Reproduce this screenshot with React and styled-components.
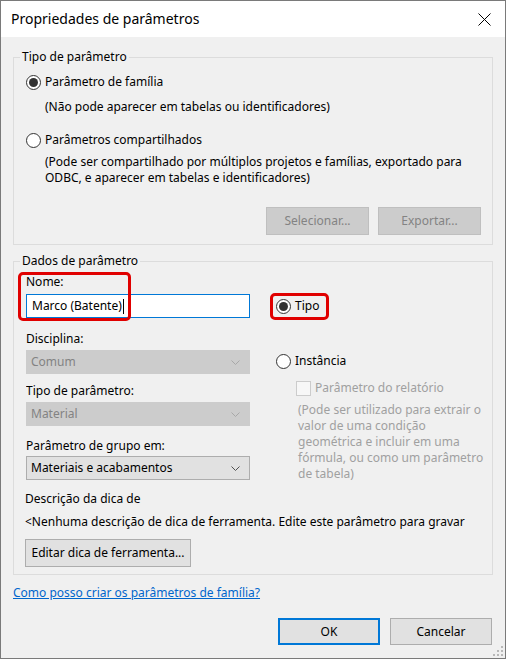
import React from "react";
import styled, { createGlobalStyle } from "styled-components";

const GlobalStyle = createGlobalStyle`
  html, body { margin: 0; padding: 0; background: #ffffff; }
  * { box-sizing: border-box; }
`;

const Window = styled.div`
  position: relative;
  width: 506px;
  height: 659px;
  border: 1px solid #7a7a7a;
  background: #f0f0f0;
  display: flex;
  flex-direction: column;
  font-family: "Noto Sans", "Segoe UI", sans-serif;
  font-size: 12px;
  line-height: 16px;
  color: #000;
`;

const TitleBar = styled.div`
  height: 36px;
  flex: none;
  background: #ffffff;
  display: flex;
  align-items: center;
  justify-content: space-between;
  padding-left: 10px;
`;

const Title = styled.span`
  font-size: 14px;
  line-height: 20px;
`;

const CloseButton = styled.div`
  width: 46px;
  height: 36px;
  display: flex;
  align-items: center;
  justify-content: center;
  padding-left: 4px;
`;

const Content = styled.div`
  padding: 12px 12px 0 12px;
  display: flex;
  flex-direction: column;
`;

const GroupBox = styled.fieldset`
  margin: ${(p) => p.$mt || 0}px 0 0 0;
  padding: 0;
  border: 1px solid #dcdcdc;
  min-width: 0;
`;

const Legend = styled.legend`
  margin-left: 6px;
  padding: 0 2px;
  line-height: 16px;
`;

const GroupBody = styled.div`
  padding: ${(p) => p.$pad};
  display: flex;
  flex-direction: column;
`;

const RadioRow = styled.div`
  display: flex;
  align-items: center;
  gap: 4px;
  height: 16px;
  margin-top: ${(p) => p.$mt || 0}px;
`;

const RadioCircle = styled.span`
  width: 15px;
  height: 15px;
  flex: none;
  border-radius: 50%;
  border: 1px solid #333333;
  background: #ffffff;
  display: flex;
  align-items: center;
  justify-content: center;
  &::after {
    content: "";
    display: ${(p) => (p.$checked ? "block" : "none")};
    width: 9px;
    height: 9px;
    border-radius: 50%;
    background: #333333;
  }
`;

const Note = styled.div`
  margin-top: ${(p) => p.$mt || 0}px;
  margin-left: ${(p) => p.$indent || 0}px;
  white-space: nowrap;
`;

const ButtonRow = styled.div`
  display: flex;
  justify-content: flex-end;
  gap: ${(p) => p.$gap}px;
  margin-top: ${(p) => p.$mt || 0}px;
  margin-right: ${(p) => p.$mr || 0}px;
`;

const Button = styled.div`
  width: ${(p) => p.$w}px;
  height: ${(p) => p.$h || 28}px;
  display: flex;
  align-items: center;
  justify-content: center;
  background: ${(p) => (p.$disabled ? "#cccccc" : "#e1e1e1")};
  border: ${(p) =>
    p.$default
      ? "2px solid #0078d7"
      : p.$disabled
      ? "1px solid #bfbfbf"
      : "1px solid #adadad"};
  color: ${(p) => (p.$disabled ? "#838383" : "#000")};
  white-space: nowrap;
  margin-top: ${(p) => p.$mt || 0}px;
  margin-left: ${(p) => p.$ml || 0}px;
`;

const Columns = styled.div`
  display: flex;
  align-items: flex-start;
`;

const LeftColumn = styled.div`
  width: 224px;
  flex: none;
  display: flex;
  flex-direction: column;
`;

const RightColumn = styled.div`
  margin-left: 26px;
  display: flex;
  flex-direction: column;
`;

const FieldLabel = styled.div`
  margin-top: ${(p) => p.$mt || 0}px;
  margin-left: ${(p) => p.$ml || 0}px;
  white-space: nowrap;
  overflow: hidden;
`;

const TextBox = styled.div`
  height: 24px;
  margin-top: ${(p) => p.$mt || 0}px;
  border: 1px solid #0078d7;
  background: #ffffff;
  display: flex;
  align-items: center;
  padding-left: 5px;
`;

const Caret = styled.span`
  width: 1px;
  height: 15px;
  background: #000;
  margin-left: 1px;
`;

const Select = styled.div`
  height: 24px;
  margin-top: ${(p) => p.$mt || 0}px;
  border: 1px solid ${(p) => (p.$disabled ? "#cccccc" : "#adadad")};
  background: ${(p) => (p.$disabled ? "#cccccc" : "#e1e1e1")};
  color: ${(p) => (p.$disabled ? "#838383" : "#000")};
  display: flex;
  align-items: center;
  justify-content: space-between;
  padding: 0 9px 0 4px;
`;

const CheckRow = styled.div`
  display: flex;
  align-items: center;
  margin-top: ${(p) => p.$mt || 0}px;
  margin-left: 20px;
  gap: 4px;
  color: #a0a0a0;
  white-space: nowrap;
`;

const CheckBox = styled.span`
  width: 15px;
  height: 15px;
  border: 1px solid #cccccc;
  background: #f7f7f7;
`;

const Hint = styled.div`
  margin-top: ${(p) => p.$mt || 0}px;
  margin-left: 22px;
  color: #a0a0a0;
  white-space: nowrap;
`;

const Link = styled.a`
  margin-top: 10px;
  align-self: flex-start;
  color: #0066cc;
  text-decoration: underline;
  cursor: pointer;
`;

const Highlight = styled.div`
  position: absolute;
  left: ${(p) => p.$x}px;
  top: ${(p) => p.$y}px;
  width: ${(p) => p.$w}px;
  height: ${(p) => p.$h}px;
  border: 3px solid #e00000;
  border-radius: 5px;
  pointer-events: none;
`;

const Grip = styled.svg`
  position: absolute;
  right: 1px;
  bottom: 1px;
`;

const Chevron = ({ color }) => (
  <svg width="9" height="5" viewBox="0 0 9 5">
    <path d="M0.5 0.5 L4.5 4.5 L8.5 0.5" fill="none" stroke={color} strokeWidth="1" />
  </svg>
);

const Radio = ({ checked, label, mt }) => (
  <RadioRow $mt={mt}>
    <RadioCircle $checked={checked} />
    <span>{label}</span>
  </RadioRow>
);

export default function App() {
  return (
    <>
      <GlobalStyle />
      <Window>
        <TitleBar>
          <Title>Propriedades de parâmetros</Title>
          <CloseButton>
            <svg width="13" height="13" viewBox="0 0 13 13">
              <path d="M0.5 0.5 L12.5 12.5 M12.5 0.5 L0.5 12.5" stroke="#000" strokeWidth="1" />
            </svg>
          </CloseButton>
        </TitleBar>

        <Content>
          <GroupBox>
            <Legend>Tipo de parâmetro</Legend>
            <GroupBody $pad="9px 11px 9px 12px">
              <Radio checked label="Parâmetro de família" />
              <Note $mt={9} $indent={19}>(Não pode aparecer em tabelas ou identificadores)</Note>
              <Radio label="Parâmetros compartilhados" mt={17} />
              <Note $mt={6} $indent={19}>
                (Pode ser compartilhado por múltiplos projetos e famílias, exportado para
                <br />
                ODBC, e aparecer em tabelas e identificadores)
              </Note>
              <ButtonRow $gap={9} $mt={21}>
                <Button $w={103} $disabled>Selecionar...</Button>
                <Button $w={103} $disabled>Exportar...</Button>
              </ButtonRow>
            </GroupBody>
          </GroupBox>

          <GroupBox $mt={8}>
            <Legend>Dados de parâmetro</Legend>
            <GroupBody $pad="5px 11px 7px 12px">
              <Columns>
                <LeftColumn>
                  <FieldLabel>Nome:</FieldLabel>
                  <TextBox $mt={4}>
                    Marco (Batente)
                    <Caret />
                  </TextBox>
                  <FieldLabel $mt={13}>Disciplina:</FieldLabel>
                  <Select $mt={3} $disabled>
                    <span>Comum</span>
                    <Chevron color="#a8a8a8" />
                  </Select>
                  <FieldLabel $mt={9}>Tipo de parâmetro:</FieldLabel>
                  <Select $mt={3} $disabled>
                    <span>Material</span>
                    <Chevron color="#a8a8a8" />
                  </Select>
                  <FieldLabel $mt={12}>Parâmetro de grupo em:</FieldLabel>
                  <Select $mt={2}>
                    <span>Materiais e acabamentos</span>
                    <Chevron color="#505050" />
                  </Select>
                </LeftColumn>
                <RightColumn>
                  <Radio checked label="Tipo" mt={24} />
                  <Radio label="Instância" mt={39} />
                  <CheckRow $mt={11}>
                    <CheckBox />
                    <span>Parâmetro do relatório</span>
                  </CheckRow>
                  <Hint $mt={6}>
                    (Pode ser utilizado para extrair o
                    <br />
                    valor de uma condição
                    <br />
                    geométrica e incluir em uma
                    <br />
                    fórmula, ou como um parâmetro
                    <br />
                    de tabela)
                  </Hint>
                </RightColumn>
              </Columns>
              <FieldLabel $mt={9} $ml={-1}>Descrição da dica de</FieldLabel>
              <FieldLabel $mt={7} $ml={-1}>
                &lt;Nenhuma descrição de dica de ferramenta. Edite este parâmetro para gravar
              </FieldLabel>
              <Button $w={166} $mt={9} $ml={-1}>Editar dica de ferramenta...</Button>
            </GroupBody>
          </GroupBox>

          <Link>Como posso criar os parâmetros de família?</Link>

          <ButtonRow $gap={10} $mt={17} $mr={1}>
            <Button $w={102} $h={27} $default>OK</Button>
            <Button $w={102} $h={27}>Cancelar</Button>
          </ButtonRow>
        </Content>

        <Highlight $x={17} $y={271} $w={113} $h={49} />
        <Highlight $x={269} $y={292} $w={59} $h={27} />

        <Grip width="12" height="12" viewBox="0 0 12 12">
          {[
            [8, 0],
            [8, 4],
            [4, 4],
            [8, 8],
            [4, 8],
            [0, 8],
          ].map(([x, y]) => (
            <rect key={`${x}-${y}`} x={x + 1} y={y + 1} width="2" height="2" fill="#b8b8b8" />
          ))}
        </Grip>
      </Window>
    </>
  );
}
